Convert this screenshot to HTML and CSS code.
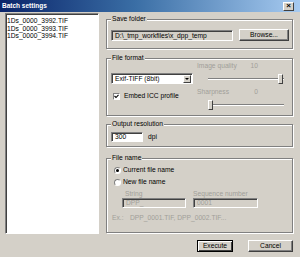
FILE: index.html
```html
<!DOCTYPE html>
<html>
<head>
<meta charset="utf-8">
<link rel="stylesheet" href="styles.css">
</head>
<body>
<div class="dialog">
  <div class="titlebar">
    <span class="title">Batch settings</span>
    <span class="close">×</span>
  </div>
  <div class="main">
    <div class="list">
      <div class="item">1Ds_0000_3992.TIF</div>
      <div class="item">1Ds_0000_3993.TIF</div>
      <div class="item">1Ds_0000_3994.TIF</div>
    </div>
    <div class="right">
      <div class="group g-save">
        <span class="legend">Save folder</span>
        <div class="row">
          <div class="field path">D:\_tmp_workfiles\x_dpp_temp</div>
          <div class="btn browse">Browse...</div>
        </div>
      </div>
      <div class="group g-format">
        <span class="legend">File format</span>
        <div class="cols">
          <div class="fmt-left">
            <div class="combo">
              <span class="combo-text">Exif-TIFF (8bit)</span>
              <span class="combo-btn"><span class="arrow"></span></span>
            </div>
            <div class="check-row">
              <span class="checkbox"><svg width="5" height="5" viewBox="0 0 5 5"><path d="M0.5 2 L2 3.5 L4.5 0.8" fill="none" stroke="#000" stroke-width="1.1"/></svg></span>
              <span>Embed ICC profile</span>
            </div>
          </div>
          <div class="fmt-right">
            <div class="lbl-row disabled"><span>Image quality</span><span>10</span></div>
            <div class="slider end"><span class="track"></span><span class="thumb"></span></div>
            <div class="lbl-row disabled sp"><span>Sharpness</span><span>0</span></div>
            <div class="slider start"><span class="track"></span><span class="thumb"></span></div>
          </div>
        </div>
      </div>
      <div class="group g-res">
        <span class="legend">Output resolution</span>
        <div class="row">
          <div class="field res">300</div>
          <span class="dpi">dpi</span>
        </div>
      </div>
      <div class="group g-name">
        <span class="legend">File name</span>
        <div class="radio-row"><span class="radio on"></span><span>Current file name</span></div>
        <div class="radio-row second"><span class="radio"></span><span>New file name</span></div>
        <div class="name-fields">
          <div class="nf str">
            <div class="nf-label disabled">String</div>
            <div class="field dis w-str">DPP_</div>
          </div>
          <div class="nf seq">
            <div class="nf-label seq-label disabled">Sequence number</div>
            <div class="field dis w-seq">0001</div>
          </div>
        </div>
        <div class="ex disabled"><span class="ex-k">Ex.:</span><span>DPP_0001.TIF, DPP_0002.TIF...</span></div>
      </div>
    </div>
  </div>
  <div class="footer">
    <div class="btn default exec">Execute</div>
    <div class="btn cancel">Cancel</div>
  </div>
</div>
</body>
</html>
```
FILE: styles.css
```css
* { box-sizing: border-box; }
html, body { margin: 0; padding: 0; }
body {
  width: 300px;
  height: 257px;
  background: #d4d0c8;
  font-family: "Liberation Sans", Arial, sans-serif;
  font-size: 6.7px;
  line-height: 8px;
  color: #000;
  overflow: hidden;
}
.dialog {
  width: 300px;
  height: 257px;
  display: flex;
  flex-direction: column;
}
.titlebar {
  height: 12px;
  background: linear-gradient(to right, #0a246a 0%, #3a6ea5 45%, #a6caf0 100%);
  display: flex;
  align-items: center;
  padding: 0 6px 0 2px;
}
.title {
  color: #fff;
  font-weight: bold;
  font-size: 6.5px;
  flex: 1;
}
.close {
  width: 11px;
  height: 9px;
  background: #d4d0c8;
  border: 1px solid;
  border-color: #fff #404040 #404040 #fff;
  font-size: 8px;
  line-height: 6px;
  text-align: center;
  font-weight: bold;
  color: #000;
}
.main {
  display: flex;
  padding: 1px 0 0 5px;
}
.list {
  width: 94px;
  height: 221px;
  background: #fff;
  border: 1px solid;
  border-color: #808080 #fff #fff #808080;
  box-shadow: inset 1px 1px 0 #404040;
  padding: 3px 0 0 1px;
}
.item { line-height: 7.5px; }
.right {
  margin-left: 7px;
  padding-top: 6px;
  width: 188px;
  display: flex;
  flex-direction: column;
}
.group {
  position: relative;
  border: 1px solid #808080;
  box-shadow: inset 1px 1px 0 #fff, 1px 1px 0 #fff;
  padding-left: 4px;
  width: 187px;
}
.legend {
  position: absolute;
  top: -5px;
  left: 4px;
  padding: 0 1px;
  background: #d4d0c8;
}
.g-save { height: 30px; padding-top: 9px; }
.g-format { height: 58px; margin-top: 9px; }
.g-res { height: 23px; margin-top: 8px; padding-top: 7px; }
.g-name { height: 75px; margin-top: 11px; padding-top: 7px; }
.row { display: flex; align-items: center; }
.field {
  height: 11px;
  background: #fff;
  border: 1px solid;
  border-color: #808080 #fff #fff #808080;
  box-shadow: inset 1px 1px 0 #404040;
  padding: 0 3px;
  line-height: 9px;
  white-space: nowrap;
  overflow: hidden;
}
.field.path { width: 122px; background: #d4d0c8; }
.btn {
  height: 12px;
  background: #d4d0c8;
  border: 1px solid;
  border-color: #fff #404040 #404040 #fff;
  box-shadow: inset -1px -1px 0 #808080;
  text-align: center;
  line-height: 10px;
}
.browse { width: 50px; margin-left: 6px; }
.cols { display: flex; }
.fmt-left { width: 82px; padding-top: 14px; }
.combo {
  height: 11px;
  display: flex;
  background: #fff;
  border: 1px solid;
  border-color: #808080 #fff #fff #808080;
  box-shadow: inset 1px 1px 0 #404040;
  padding: 1px 1px 1px 1px;
}
.combo-text { flex: 1; padding-left: 2px; line-height: 8px; }
.combo-btn {
  width: 8px;
  height: 8px;
  background: #d4d0c8;
  border: 1px solid;
  border-color: #fff #404040 #404040 #fff;
  display: flex;
  align-items: center;
  justify-content: center;
}
.arrow {
  width: 0; height: 0;
  border-left: 2px solid transparent;
  border-right: 2px solid transparent;
  border-top: 2px solid #000;
}
.check-row {
  display: flex;
  align-items: center;
  margin-top: 8px;
  padding-left: 2px;
}
.checkbox {
  width: 7px;
  height: 7px;
  background: #fff;
  border: 1px solid;
  border-color: #808080 #fff #fff #808080;
  margin-right: 4px;
  display: flex;
  align-items: center;
  justify-content: center;
}
.checkbox svg { display: block; }
.fmt-right {
  margin-left: 4px;
  padding-top: 3px;
  width: 90px;
}
.disabled { color: #a19f99; }
.lbl-row {
  width: 61px;
  display: flex;
  justify-content: space-between;
}
.lbl-row.sp { margin-top: 4px; }
.slider {
  position: relative;
  margin: 4px 0 0 11px;
  width: 76px;
  height: 10px;
}
.track {
  position: absolute;
  left: 0; right: 0; top: 4px;
  height: 2px;
  border-top: 1px solid #808080;
  border-bottom: 1px solid #fff;
}
.thumb {
  position: absolute;
  top: 0;
  width: 5px;
  height: 10px;
  background: #d4d0c8;
  border: 1px solid;
  border-color: #fff #404040 #404040 #fff;
}
.slider.end .thumb { right: 1px; }
.slider.start .thumb { left: 0; }
.field.res { width: 32px; height: 10px; line-height: 8px; }
.dpi { margin-left: 5px; }
.radio-row {
  display: flex;
  align-items: center;
  padding-left: 3px;
  height: 8px;
}
.radio-row.second { margin-top: 4px; }
.radio {
  width: 7px;
  height: 7px;
  border-radius: 50%;
  background: #fff;
  border: 1px solid;
  border-color: #808080 #fff #fff #808080;
  margin-right: 2px;
  display: flex;
  align-items: center;
  justify-content: center;
}
.radio.on::after {
  content: "";
  width: 3px;
  height: 3px;
  border-radius: 50%;
  background: #000;
}
.name-fields {
  display: flex;
  margin: 4px 0 0 11px;
}
.nf-label { padding-left: 3px; height: 8px; }
.nf-label.seq-label { padding-left: 0; }
.seq { margin-left: 7px; }
.field.dis {
  background: #d4d0c8;
  color: #a19f99;
  height: 10px;
  line-height: 8px;
}
.w-str { width: 64px; }
.w-seq { width: 65px; }
.ex { margin-top: 6px; padding-left: 1px; display: flex; }
.ex-k { width: 18px; }
.footer {
  display: flex;
  justify-content: flex-end;
  padding: 6px 7px 0 0;
}
.exec {
  width: 36px;
  border: 1px solid #000;
  box-shadow: inset 1px 1px 0 #fff, inset -1px -1px 0 #404040;
}
.cancel { width: 45px; margin-left: 15px; }
```
